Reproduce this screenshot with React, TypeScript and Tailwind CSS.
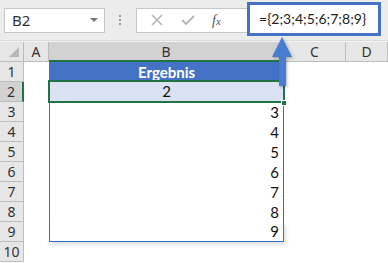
import React from "react";

const cols = ["A", "B", "C", "D"];
const values = [3, 4, 5, 6, 7, 8, 9];

const uiFont = { fontFamily: '"Noto Sans", "Open Sans", sans-serif' };
const cellFont = { fontFamily: 'Lato, "Liberation Sans", sans-serif' };

function RowHead({ n, active }: { n: number; active?: boolean }) {
  return (
    <div
      className={`flex items-center justify-center border-b border-r text-[14px] text-[#333] ${
        active
          ? "bg-[#d2d2d2] border-b-[#bdbdbd] border-r-2 border-r-[#217346]"
          : "bg-[#e6e6e6] border-[#bdbdbd]"
      }`}
      style={uiFont}
    >
      {n}
    </div>
  );
}

export default function App() {
  return (
    <div className="relative w-[388px] h-[263px] overflow-hidden bg-white">
      {/* toolbar */}
      <div className="flex items-center h-[41px] bg-[#ececec] border-b border-[#dcdcdc]">
        <div className="ml-[4px] w-[101px] h-[25px] bg-white border border-[#c6c6c6] flex items-center justify-between pl-[7px] pr-[6px]">
          <span className="text-[15px] text-[#333]" style={uiFont}>
            B2
          </span>
          <span className="w-0 h-0 border-l-[4px] border-r-[4px] border-t-[4px] border-l-transparent border-r-transparent border-t-[#777]" />
        </div>
        <div className="ml-[14px] flex flex-col gap-[2px]">
          <span className="w-[2px] h-[2px] bg-[#9a9a9a]" />
          <span className="w-[2px] h-[2px] bg-[#9a9a9a]" />
          <span className="w-[2px] h-[2px] bg-[#9a9a9a]" />
        </div>
        <div className="ml-[15px] w-[114px] h-[25px] bg-white border border-[#c6c6c6] flex items-center">
          <svg width="12" height="12" viewBox="0 0 12 12" className="ml-[14px]">
            <path d="M1 1 L11 11 M11 1 L1 11" stroke="#b5b5b5" strokeWidth="1.6" />
          </svg>
          <svg width="14" height="12" viewBox="0 0 14 12" className="ml-[18px]">
            <path d="M1 6 L5 10 L13 2" stroke="#b5b5b5" strokeWidth="1.8" fill="none" />
          </svg>
          <span
            className="ml-[17px] text-[14px] italic text-[#555]"
            style={{ fontFamily: '"Liberation Serif", serif' }}
          >
            f<span className="text-[11px]">x</span>
          </span>
        </div>
        <div className="-ml-[3px] -mt-[3px] w-[134px] h-[34px] bg-white border-[3px] border-[#4472c4] flex items-center pl-[9px]">
          <span className="text-[14px] text-[#222]" style={cellFont}>
            ={"{"}2;3;4;5;6;7;8;9{"}"}
          </span>
        </div>
      </div>
      <div className="h-[1px] bg-[#f4f4f4]" />

      {/* grid */}
      <div className="grid grid-cols-[24px_25px_235px_62px_1fr] grid-rows-[20px_repeat(10,20px)]">
        <div className="bg-[#e6e6e6] border-r border-b border-[#bdbdbd] flex items-end justify-end p-[4px]">
          <span className="w-0 h-0 border-l-[10px] border-b-[10px] border-l-transparent border-b-[#b8b8b8]" />
        </div>
        {cols.map((c) => (
          <div
            key={c}
            className={`flex items-center justify-center text-[14px] text-[#333] border-r border-[#bdbdbd] ${
              c === "B" ? "bg-[#d2d2d2] border-b-2 border-b-[#217346]" : "bg-[#e6e6e6] border-b border-b-[#bdbdbd]"
            }`}
            style={uiFont}
          >
            {c}
          </div>
        ))}

        <RowHead n={1} />
        <div />
        <div
          className="bg-[#4472c4] text-white font-bold text-[15px] flex items-center justify-center"
          style={cellFont}
        >
          Ergebnis
        </div>
        <div />
        <div />

        <RowHead n={2} active />
        <div />
        <div className="relative">
          <div
            className="absolute -left-[1px] -top-[2px] -right-[1px] -bottom-[1px] bg-[#d9e1f2] border-2 border-[#217346] flex items-center justify-center text-[15px] text-[#111]"
            style={cellFont}
          >
            2
          </div>
          <span className="absolute -right-[3px] -bottom-[4px] w-[6px] h-[6px] bg-[#217346] border border-white" />
        </div>
        <div />
        <div />

        {values.map((v, i) => (
          <React.Fragment key={v}>
            <RowHead n={v} />
            <div />
            <div
              className={`flex items-center justify-end pr-[4px] text-[15px] text-[#111] border-l border-r border-[#2f6fd0] ${
                i === values.length - 1 ? "border-b shadow-[2px_3px_4px_rgba(0,0,0,0.12)]" : ""
              }`}
              style={cellFont}
            >
              {v}
            </div>
            <div />
            <div />
          </React.Fragment>
        ))}

        <RowHead n={10} />
        <div />
        <div />
        <div />
        <div />
      </div>

      {/* arrow */}
      <svg
        className="absolute left-[268px] top-[34px]"
        width="30"
        height="56"
        viewBox="0 0 30 56"
      >
        <defs>
          <filter id="sh" x="-50%" y="-50%" width="200%" height="200%">
            <feDropShadow dx="1" dy="1" stdDeviation="1.5" floodColor="#000" floodOpacity="0.3" />
          </filter>
        </defs>
        <path
          d="M14 3 L24 23 L18 23 L18 52 L11 52 L11 23 L4 23 Z"
          fill="#4a7dd1"
          filter="url(#sh)"
        />
      </svg>
    </div>
  );
}
